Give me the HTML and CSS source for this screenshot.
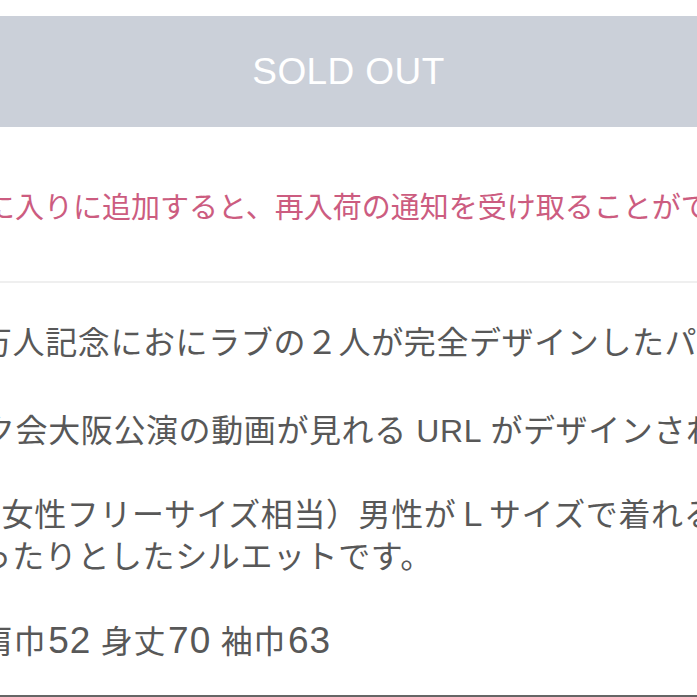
FILE: index.html
```html
<!DOCTYPE html>
<html lang="ja">
<head>
  <meta charset="UTF-8" />
  <title>商品詳細</title>
  <link rel="stylesheet" href="styles.css">
</head>
<body>
  <div class="page">
    <div class="buy-area">
      <button class="sold-out" disabled>SOLD OUT</button>
      <p class="restock-note">お気に入りに追加すると、再入荷の通知を受け取ることができます。</p>
    </div>

    <div class="description">
      <p class="desc-line shift-a">万人記念におにラブの２人が完全デザインしたパーカーです。</p>
      <p class="desc-line shift-b">ク会大阪公演の動画が見れる URL がデザインされています。</p>
      <p class="desc-line shift-c">（女性フリーサイズ相当）男性がＬサイズで着れる<br><span class="shift-d">ゆったりとしたシルエットです。</span></p>
      <p class="desc-line shift-e">肩巾<span class="num">52</span> 身丈<span class="num">70</span> 袖巾<span class="num">63</span></p>
    </div>

    <hr class="bottom-rule">
  </div>
</body>
</html>
```

FILE: styles.css
```css
body {
  margin: 0;
  background: #fff;
  font-family: "Noto Sans CJK JP", sans-serif;
  overflow: hidden;
}

.page {
  width: 697px;
  height: 697px;
  overflow: hidden;
  position: relative;
}

.buy-area {
  padding-top: 16px;
  border-bottom: 2px solid #efefef;
}

.sold-out {
  display: block;
  width: 100%;
  height: 111px;
  margin: 0;
  border: none;
  background-color: #cbd0d9;
  color: #fff;
  font-family: "Liberation Sans", Arial, sans-serif;
  font-size: 37px;
  letter-spacing: 0.4px;
}

.restock-note {
  margin: 58px 0 56px -72px;
  white-space: nowrap;
  font-size: 29px;
  line-height: 40px;
  color: #cc5c80;
}

.description {
  padding-top: 39px;
  color: #585858;
  font-family: "Liberation Sans", "Noto Sans CJK JP", sans-serif;
}

.desc-line {
  margin: 0 0 42px;
  white-space: nowrap;
  font-size: 32px;
  letter-spacing: 0.6px;
  line-height: 42px;
}

.num {
  font-size: 37px;
  letter-spacing: 1px;
  margin-left: 2px;
}

.shift-a { margin-left: -20px; margin-bottom: 46px; }
.shift-b { margin-left: -17px; }
.shift-c { margin-left: -31px; }
.shift-d { margin-left: -22px; }
.shift-e { margin-left: -19px; }

.bottom-rule {
  position: absolute;
  left: 0;
  right: 0;
  bottom: 0;
  margin: 0;
  border: none;
  height: 2px;
  background: #666;
}
```
